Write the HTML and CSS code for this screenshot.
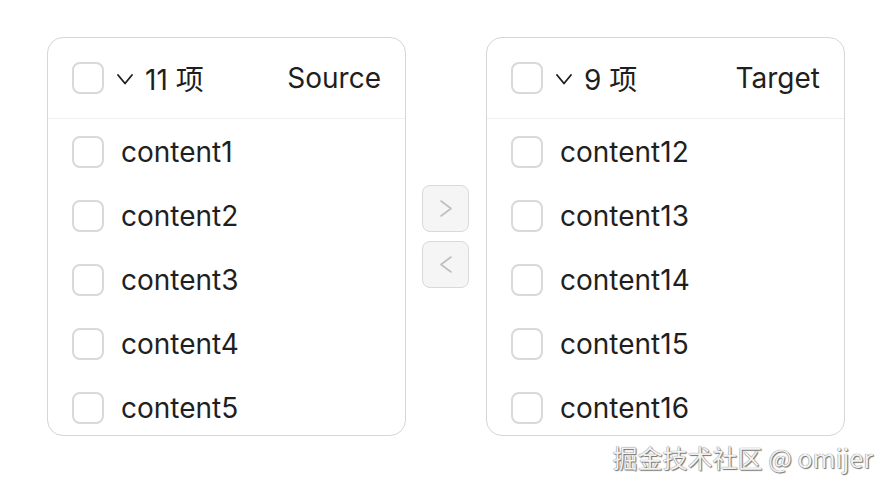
FILE: index.html
```html
<!DOCTYPE html>
<html lang="zh">
<head>
<meta charset="utf-8">
<title>Transfer</title>
<link rel="stylesheet" href="styles.css">
</head>
<body>
<div class="transfer">
  <div class="panel">
    <div class="header">
      <span class="checkbox"></span>
      <svg class="down" width="16" height="12" viewBox="0 0 16 12"><polyline points="1,2 8,10.5 15,2" fill="none" stroke="#1f1f1f" stroke-width="1.8" stroke-linejoin="round" stroke-linecap="round"/></svg>
      <span class="count">11 项</span>
      <span class="title">Source</span>
    </div>
    <div class="list">
      <div class="item"><span class="checkbox"></span><span class="label">content1</span></div>
      <div class="item"><span class="checkbox"></span><span class="label">content2</span></div>
      <div class="item"><span class="checkbox"></span><span class="label">content3</span></div>
      <div class="item"><span class="checkbox"></span><span class="label">content4</span></div>
      <div class="item"><span class="checkbox"></span><span class="label">content5</span></div>
    </div>
  </div>
  <div class="ops">
    <button class="op" type="button"><svg width="12" height="17" viewBox="0 0 12 17"><polyline points="1,1 11,8.5 1,16" fill="none" stroke="#bfbfbf" stroke-width="1.6" stroke-linejoin="round" stroke-linecap="round"/></svg></button>
    <button class="op" type="button"><svg width="12" height="17" viewBox="0 0 12 17"><polyline points="11,1 1,8.5 11,16" fill="none" stroke="#bfbfbf" stroke-width="1.6" stroke-linejoin="round" stroke-linecap="round"/></svg></button>
  </div>
  <div class="panel">
    <div class="header">
      <span class="checkbox"></span>
      <svg class="down" width="16" height="12" viewBox="0 0 16 12"><polyline points="1,2 8,10.5 15,2" fill="none" stroke="#1f1f1f" stroke-width="1.8" stroke-linejoin="round" stroke-linecap="round"/></svg>
      <span class="count">9 项</span>
      <span class="title">Target</span>
    </div>
    <div class="list">
      <div class="item"><span class="checkbox"></span><span class="label">content12</span></div>
      <div class="item"><span class="checkbox"></span><span class="label">content13</span></div>
      <div class="item"><span class="checkbox"></span><span class="label">content14</span></div>
      <div class="item"><span class="checkbox"></span><span class="label">content15</span></div>
      <div class="item"><span class="checkbox"></span><span class="label">content16</span></div>
    </div>
  </div>
</div>
<div class="watermark">掘金技术社区 @ omijer</div>
</body>
</html>
```
FILE: styles.css
```css
html, body {
  margin: 0;
  padding: 0;
  background: #ffffff;
}
body {
  width: 890px;
  height: 488px;
  overflow: hidden;
  position: relative;
  font-family: Inter, "Noto Sans CJK SC", sans-serif;
  color: #1f1f1f;
}
.transfer {
  display: flex;
  align-items: center;
  padding: 37px 0 0 47px;
}
.panel {
  box-sizing: border-box;
  width: 359px;
  height: 399px;
  border: 1px solid #d6d6d6;
  border-radius: 16px;
  overflow: hidden;
  display: flex;
  flex-direction: column;
}
.header {
  flex: none;
  height: 80px;
  border-bottom: 1px solid #f0f0f0;
  display: flex;
  align-items: center;
  padding: 0 24px;
  font-size: 28px;
}
.checkbox {
  flex: none;
  box-sizing: border-box;
  width: 32px;
  height: 32px;
  border: 2px solid #d9d9d9;
  border-radius: 8px;
  background: #fff;
}
.down {
  flex: none;
  margin-left: 13px;
  margin-top: 2px;
}
.count {
  margin-left: 12px;
}
.title {
  margin-left: auto;
}
.list {
  flex: 1;
  overflow: hidden;
  padding-top: 1px;
}
.item {
  height: 64px;
  display: flex;
  align-items: center;
  padding: 0 24px;
  font-size: 28px;
}
.label {
  margin-left: 17px;
}
.ops {
  display: flex;
  flex-direction: column;
  gap: 9px;
  margin: 0 17px 0 16px;
}
.op {
  box-sizing: border-box;
  width: 47px;
  height: 47px;
  padding: 0;
  border: 1px solid #d9d9d9;
  border-radius: 8px;
  background: #f5f5f5;
  display: flex;
  align-items: center;
  justify-content: center;
}
.watermark {
  position: absolute;
  right: 17px;
  top: 440px;
  font-size: 25px;
  line-height: 34px;
  font-family: "Noto Sans CJK SC", sans-serif;
  color: #f2f2f2;
  text-shadow: 0 0 1px #4d4d4d, 1px 1px 1px #777;
  white-space: nowrap;
}
```
